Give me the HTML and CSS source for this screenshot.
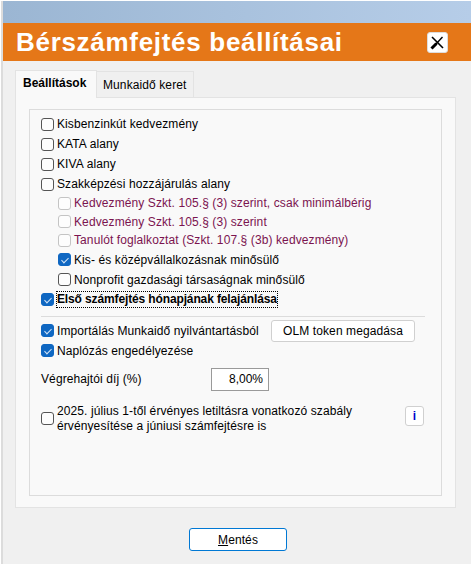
FILE: index.html
```html
<!DOCTYPE html>
<html lang="hu">

<head>
  <meta charset="UTF-8">
  <meta name="viewport" content="width=device-width, initial-scale=1.0">
  <title>Bérszámfejtés beállításai</title>
  <link rel="stylesheet" href="styles.css">
</head>

<body>
  <div class="window">
    <div class="top-strip"></div>

    <div class="title-bar">
      <h1 class="title">Bérszámfejtés beállításai</h1>
      <button class="close-button" aria-label="Bezárás">
        <svg width="17" height="17" viewBox="0 0 17 17">
          <line x1="3" y1="3" x2="14" y2="14" stroke="#000" stroke-width="1.6" />
          <line x1="13.5" y1="3" x2="7" y2="10" stroke="#000" stroke-width="1.4" />
          <line x1="7.5" y1="9.5" x2="2.5" y2="14.5" stroke="#000" stroke-width="3" />
        </svg>
      </button>
    </div>

    <div class="content">
      <div class="tabs">
        <div class="tab tab-active">Beállítások</div>
        <div class="tab">Munkaidő keret</div>
      </div>

      <div class="tab-panel">
        <div class="settings-box">
          <label class="row"><input type="checkbox"> Kisbenzinkút kedvezmény</label>
          <label class="row"><input type="checkbox"> KATA alany</label>
          <label class="row"><input type="checkbox"> KIVA alany</label>
          <label class="row"><input type="checkbox"> Szakképzési hozzájárulás alany</label>

          <label class="row row-sub row-tight disabled"><input type="checkbox" disabled> Kedvezmény Szkt. 105.§ (3) szerint, csak minimálbérig</label>
          <label class="row row-sub row-tight disabled"><input type="checkbox" disabled> Kedvezmény Szkt. 105.§ (3) szerint</label>
          <label class="row row-sub row-tight disabled"><input type="checkbox" disabled> Tanulót foglalkoztat (Szkt. 107.§ (3b) kedvezmény)</label>
          <label class="row row-sub"><input type="checkbox" checked> Kis- és középvállalkozásnak minősülő</label>
          <label class="row row-sub"><input type="checkbox"> Nonprofit gazdasági társaságnak minősülő</label>
          <label class="row row-focus"><input type="checkbox" checked> <span class="focus-text">Első számfejtés hónapjának felajánlása</span></label>

          <div class="divider"></div>

          <div class="row row-import">
            <label class="row-label"><input type="checkbox" checked> Importálás Munkaidő nyilvántartásból</label>
            <button class="button token-button">OLM token megadása</button>
          </div>
          <label class="row"><input type="checkbox" checked> Naplózás engedélyezése</label>

          <div class="fee-row">
            <span class="fee-label">Végrehajtói díj (%)</span>
            <input class="fee-input" type="text" value="8,00%">
          </div>

          <div class="long-row">
            <input type="checkbox">
            <span class="long-text">2025. július 1-től érvényes letiltásra vonatkozó szabály érvényesítése a júniusi számfejtésre is</span>
            <button class="button info-button">i</button>
          </div>
        </div>
      </div>

      <div class="footer">
        <button class="button save-button"><u>M</u>entés</button>
      </div>
    </div>
  </div>
</body>

</html>
```

FILE: styles.css
```css
html,
body {
  margin: 0;
  height: 100%;
}

body {
  background-color: #ffffff;
  color: #000000;
  font-family: "Liberation Sans", Arial, sans-serif;
  font-size: 12px;
  letter-spacing: 0.1px;
  overflow: hidden;
}

/* Ablak */
.window {
  display: flex;
  flex-direction: column;
  height: 563px;
  margin-top: 1px;
  margin-left: 1px;
  border-left: 2px solid #dcdcdc;
  background-color: #f0f0f0;
}

.top-strip {
  flex-shrink: 0;
  height: 22px;
  background: linear-gradient(to right, #9bb6d3, #b6cde8);
}

.title-bar {
  display: flex;
  flex-shrink: 0;
  align-items: center;
  justify-content: space-between;
  height: 38px;
  padding: 0 23px 0 13px;
  background-color: #e57718;
}

.title {
  margin: 0;
  color: #ffffff;
  font-size: 26px;
  font-weight: bold;
  letter-spacing: 0.7px;
}

.close-button {
  display: flex;
  align-items: center;
  justify-content: center;
  width: 21px;
  height: 21px;
  padding: 0;
  border: 1px solid #dddddd;
  border-radius: 3px;
  background-color: #ffffff;
}

.content {
  display: flex;
  flex-direction: column;
  flex: 1;
  padding: 10px 15px 0 12px;
}

/* Tabok */
.tabs {
  display: flex;
  align-items: flex-end;
  height: 27px;
  margin-bottom: -1px;
}

.tab {
  position: relative;
  height: 25px;
  padding: 0 7px 0 6px;
  border: 1px solid #e3e3e3;
  border-left: none;
  line-height: 26px;
}

.tab-active {
  z-index: 1;
  width: 68px;
  height: 27px;
  padding: 0 5px 0 7px;
  border-left: 1px solid #e3e3e3;
  border-bottom: none;
  background-color: #f9f9f9;
  font-weight: bold;
  letter-spacing: 0;
  line-height: 24px;
}

.tab-panel {
  box-sizing: border-box;
  height: 411px;
  padding: 11px 13px 11px 13px;
  border: 1px solid #e3e3e3;
  background-color: #f9f9f9;
}

.settings-box {
  box-sizing: border-box;
  height: 100%;
  padding: 4px 11px 0 11px;
  border: 1px solid #dcdcdc;
}

/* Regels */
.row {
  display: flex;
  align-items: center;
  gap: 3px;
  height: 20px;
}

.row-sub {
  padding-left: 17px;
}

.row-tight {
  height: 18.5px;
}

.row-label {
  display: flex;
  align-items: center;
  gap: 3px;
}

.disabled {
  color: #7b1450;
}

.focus-text {
  margin-left: -1px;
  padding: 1px 1px 2px 1px;
  outline: 1px dotted #000000;
  outline-offset: -1px;
  font-weight: bold;
  letter-spacing: -0.13px;
}

.divider {
  height: 1px;
  margin: 6px 5px 4px 0;
  background-color: #dcdcdc;
}

.row-import {
  justify-content: space-between;
  padding-right: 15px;
}

/* Checkbox */
input[type="checkbox"] {
  position: relative;
  flex-shrink: 0;
  box-sizing: border-box;
  width: 13px;
  height: 13px;
  margin: 0;
  border: 1px solid #555555;
  border-radius: 3px;
  background-color: #fdfdfd;
  appearance: none;
}

input[type="checkbox"]:disabled {
  border-color: #c4c4c4;
}

input[type="checkbox"]:checked {
  border-color: #0f67c2;
  background-color: #0f67c2;
}

input[type="checkbox"]:checked::after {
  content: "";
  position: absolute;
  top: 2px;
  left: 3.5px;
  width: 3px;
  height: 6px;
  border: solid #d5e5f7;
  border-width: 0 1px 1px 0;
  transform: rotate(45deg);
}

/* Knoppen */
.button {
  border: 1px solid #d0d0d0;
  border-radius: 3px;
  background-color: #ffffff;
  color: #000000;
  font-family: inherit;
  font-size: 12px;
  letter-spacing: 0.1px;
}

.token-button {
  width: 144px;
  height: 22px;
  padding: 0;
}

.fee-row {
  display: flex;
  align-items: center;
  justify-content: space-between;
  width: 228px;
  margin-top: 7px;
}

.fee-input {
  box-sizing: border-box;
  width: 58px;
  height: 23px;
  padding: 0 5px;
  border: 1px solid #9a9a9a;
  background-color: #ffffff;
  font-family: inherit;
  font-size: 12px;
  text-align: right;
}

.long-row {
  display: flex;
  align-items: center;
  gap: 3px;
  margin-top: 13px;
}

.long-text {
  width: 330px;
  line-height: 15px;
}

.info-button {
  width: 19px;
  height: 20px;
  margin-left: 15px;
  margin-top: -5px;
  padding: 0;
  color: #0000cc;
  font-weight: bold;
}

.footer {
  display: flex;
  justify-content: center;
  padding-top: 20px;
  padding-left: 5px;
}

.save-button {
  width: 98px;
  height: 23px;
  padding: 0;
  border: 1px solid #0078d4;
}
```
